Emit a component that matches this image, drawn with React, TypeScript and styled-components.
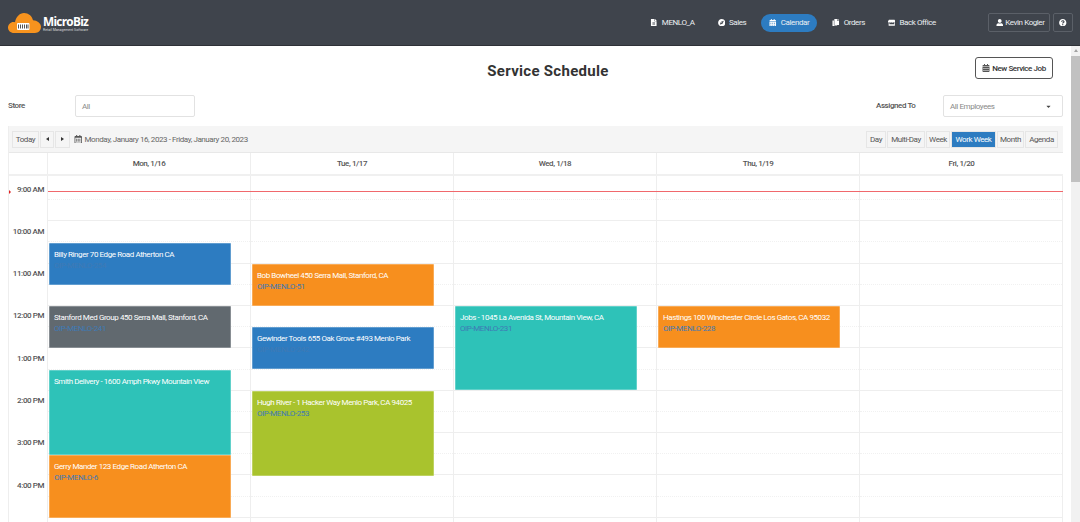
import React from "react";
import styled, { createGlobalStyle } from "styled-components";
import {
  FaCalendarAlt,
  FaCaretDown,
  FaCompass,
  FaCopy,
  FaFileAlt,
  FaQuestionCircle,
  FaRegCalendarAlt,
  FaStore,
  FaUser,
} from "react-icons/fa";

const Global = createGlobalStyle`
  html, body { margin: 0; height: 100%; overflow: hidden; background: #fff; }
  body { font-family: Roboto, "Liberation Sans", sans-serif; color: #444; letter-spacing: -0.42px; }
  button { letter-spacing: inherit; }
  * { box-sizing: border-box; }
`;

const Page = styled.div`
  height: 522px;
  display: flex;
  flex-direction: column;
`;

const Header = styled.header`
  height: 46px;
  flex: none;
  background: #3f444c;
  border-bottom: 1px solid #2e3137;
  display: flex;
  align-items: center;
  padding: 0 7px 0 8px;
`;

const Logo = styled.div`
  display: flex;
  align-items: center;
  gap: 2px;
  flex: 1;
`;

const LogoWords = styled.div`
  display: flex;
  flex-direction: column;
  margin-top: 3px;
  color: #fff;
`;

const LogoName = styled.span`
  font-family: "Open Sans", sans-serif;
  font-size: 11.8px;
  line-height: 13px;
  font-weight: 700;
  letter-spacing: -0.7px;
`;

const LogoTag = styled.span`
  font-size: 3.5px;
  line-height: 5px;
  letter-spacing: 0;
  color: #d8d8d8;
  white-space: nowrap;
`;

const Nav = styled.nav`
  display: flex;
  gap: 7px;
`;

const NavItem = styled.a<{ $active?: boolean }>`
  height: 18px;
  padding: 0 8px;
  display: flex;
  align-items: center;
  gap: 4px;
  border-radius: 9px;
  font-size: 8px;
  color: #eceff2;
  background: ${(p) => (p.$active ? "#2d7cc1" : "transparent")};
  svg { font-size: 7.5px; color: #fff; }
`;

const UserArea = styled.div`
  display: flex;
  gap: 3px;
  margin-left: 44px;
`;

const HeaderButton = styled.button<{ $pad: string }>`
  height: 19px;
  padding: ${(p) => p.$pad};
  display: flex;
  align-items: center;
  gap: 2px;
  background: transparent;
  border: 1px solid #5b6068;
  border-radius: 2px;
  color: #eceff2;
  font: 8px Roboto, sans-serif;
  svg { font-size: 7.5px; color: #fff; }
`;

const Workspace = styled.div`
  flex: 1;
  min-height: 0;
  display: flex;
`;

const Main = styled.main`
  flex: 1;
  min-width: 0;
  overflow: hidden;
  padding: 11px 8px 0;
`;

const ScrollTrack = styled.div`
  width: 9px;
  flex: none;
  background: #f1f1f1;
  display: flex;
  flex-direction: column;
  align-items: center;
`;

const ScrollUp = styled.div`
  margin: 3px 0 4px;
  width: 0;
  height: 0;
  border-left: 2.5px solid transparent;
  border-right: 2.5px solid transparent;
  border-bottom: 3px solid #a3a3a3;
`;

const ScrollThumb = styled.div`
  width: 100%;
  height: 126px;
  background: #c1c1c1;
`;

const TitleRow = styled.div`
  display: grid;
  grid-template-columns: 1fr auto 1fr;
  align-items: start;
  height: 23px;
  padding-left: 35px;
  padding-right: 10px;
`;

const Title = styled.h1`
  grid-column: 2;
  margin: 0;
  padding-top: 5px;
  font-size: 15px;
  line-height: 18px;
  font-weight: 700;
  letter-spacing: 0.3px;
  color: #333;
`;

const NewJob = styled.button`
  justify-self: end;
  width: 78px;
  height: 22px;
  padding: 0;
  background: #fff;
  border: 1px solid #555;
  border-radius: 3px;
  display: flex;
  align-items: center;
  justify-content: center;
  gap: 2px;
  font: 500 8px Roboto, sans-serif;
  color: #333;
  svg { font-size: 8px; color: #555; }
`;

const FilterRow = styled.div`
  margin-top: 15px;
  height: 22px;
  display: flex;
  align-items: flex-start;
`;

const FilterLabel = styled.label<{ $width: number }>`
  width: ${(p) => p.$width}px;
  padding-top: 6px;
  font-size: 8px;
  font-weight: 500;
  line-height: 10px;
  color: #555;
`;

const Field = styled.div`
  width: 120px;
  height: 22px;
  padding: 0 6px;
  display: flex;
  align-items: center;
  justify-content: space-between;
  border: 1px solid #e2e2e2;
  border-radius: 2px;
  font-size: 8px;
  color: #8a8a8a;
  svg { font-size: 7px; color: #444; margin-right: 4px; }
`;

const FilterGap = styled.div`
  flex: 1;
`;

const Scheduler = styled.section`
  margin-top: 9px;
  width: 1055px;
  border-left: 1px solid #eee;
`;

const Toolbar = styled.div`
  height: 27px;
  background: #f5f5f5;
  padding: 0 5px 0 3px;
  display: flex;
  align-items: center;
  border-bottom: 1px solid #e8e8e8;
`;

const ToolGroup = styled.div`
  display: flex;
  gap: 1px;
`;

const ToolButton = styled.button<{ $active?: boolean; $width: number }>`
  width: ${(p) => p.$width}px;
  height: 17px;
  padding: 0;
  display: flex;
  align-items: center;
  justify-content: center;
  border: 1px solid #e6e6e6;
  background: ${(p) => (p.$active ? "#2d7cc1" : "#f5f5f5")};
  color: ${(p) => (p.$active ? "#fff" : "#555")};
  font: 8px Roboto, sans-serif;
`;

const Arrow = styled.span<{ $dir: "l" | "r" }>`
  width: 0;
  height: 0;
  border-top: 2.5px solid transparent;
  border-bottom: 2.5px solid transparent;
  ${(p) => (p.$dir === "l" ? "border-right: 3px solid #333;" : "border-left: 3px solid #333;")}
`;

const DateRange = styled.div`
  margin-left: 4px;
  flex: 1;
  display: flex;
  align-items: center;
  gap: 2px;
  font-size: 8px;
  color: #666;
  svg { font-size: 8.5px; color: #555; }
`;

const HeadRow = styled.div`
  display: flex;
  height: 23px;
  border-bottom: 2px solid #f0f0f0;
`;

const GutterHead = styled.div`
  width: 39px;
  flex: none;
  border-right: 1px solid #eee;
`;

const DayHead = styled.div`
  width: 203px;
  flex: none;
  display: flex;
  align-items: center;
  justify-content: center;
  border-right: 1px solid #eee;
  font-size: 8px;
  font-weight: 500;
  color: #555;
  &:last-child { border-right: 0; }
`;

const Body = styled.div`
  position: relative;
  display: flex;
`;

const Gutter = styled.div`
  width: 39px;
  flex: none;
  border-right: 1px solid #eee;
  padding-top: 8.5px;
`;

const HourLabel = styled.div`
  height: 42.33px;
  padding-right: 3px;
  text-align: right;
  white-space: nowrap;
  font-size: 8px;
  line-height: 10px;
  font-weight: 500;
  color: #555;
`;

const DayColumn = styled.div`
  position: relative;
  width: 203px;
  flex: none;
  border-right: 1px solid #eee;
  &:last-of-type { border-right: 0; }
`;

const Slot = styled.div<{ $hour: boolean }>`
  height: 21.2px;
  border-bottom: 1px ${(p) => (p.$hour ? "solid #eee" : "dotted #f1f1f1")};
  &:first-child { height: 24px; }
`;

const Job = styled.article<{ $top: number; $height: number; $color: string }>`
  position: absolute;
  top: ${(p) => p.$top}px;
  left: 0.5px;
  width: 182px;
  height: ${(p) => p.$height}px;
  padding: 5px 4.5px;
  background: ${(p) => p.$color};
  border: 1px solid rgba(255, 255, 255, 0.25);
  border-radius: 1px;
  font-size: 8px;
  line-height: 11px;
`;

const JobTitle = styled.div`
  color: #fff;
  white-space: nowrap;
`;

const JobCode = styled.div`
  color: #3f7ab5;
`;

const NowLine = styled.div`
  position: absolute;
  left: 39px;
  right: 0;
  top: 15px;
  height: 1px;
  background: #f0686c;
`;

const NowMarker = styled.div`
  position: absolute;
  left: 0;
  top: 13.5px;
  width: 0;
  height: 0;
  border-top: 2px solid transparent;
  border-bottom: 2px solid transparent;
  border-left: 2px solid #e02020;
`;

const FootRow = styled.div`
  display: flex;
  height: 6px;
`;

const FootCell = styled.div<{ $width: number; $fill: boolean }>`
  width: ${(p) => p.$width}px;
  border-right: 1px solid #eee;
  background: ${(p) => (p.$fill ? "#f5f5f5" : "#fbfbfb")};
`;

const BLUE = "#2d7cc1";
const ORANGE = "#f78f1e";
const TEAL = "#2ec2b8";
const GREEN = "#a9c32d";
const SLATE = "#61696f";

type JobData = { top: number; height: number; color: string; title: string; code?: string };

const days: { label: string; jobs: JobData[] }[] = [
  {
    label: "Mon, 1/16",
    jobs: [
      { top: 66.5, height: 42, color: BLUE, title: "Billy Ringer 70 Edge Road Atherton CA", code: "OIP-MENLO-254" },
      { top: 130, height: 42, color: SLATE, title: "Stanford Med Group 450 Serra Mall, Stanford, CA", code: "OIP-MENLO-241" },
      { top: 193.5, height: 85, color: TEAL, title: "Smith Delivery - 1600 Amph Pkwy Mountain View" },
      { top: 278.5, height: 63, color: ORANGE, title: "Gerry Mander 123 Edge Road Atherton CA", code: "OIP-MENLO-6" },
    ],
  },
  {
    label: "Tue, 1/17",
    jobs: [
      { top: 87.5, height: 42, color: ORANGE, title: "Bob Bowheel 450 Serra Mall, Stanford, CA", code: "OIP-MENLO-51" },
      { top: 151, height: 42, color: BLUE, title: "Gewinder Tools 655 Oak Grove #493 Menlo Park", code: "OIP-MENLO-242" },
      { top: 214.5, height: 85, color: GREEN, title: "Hugh River - 1 Hacker Way Menlo Park, CA 94025", code: "OIP-MENLO-253" },
    ],
  },
  {
    label: "Wed, 1/18",
    jobs: [{ top: 130, height: 84, color: TEAL, title: "Jobs - 1045 La Avenida St, Mountain View, CA", code: "OIP-MENLO-231" }],
  },
  {
    label: "Thu, 1/19",
    jobs: [{ top: 130, height: 42, color: ORANGE, title: "Hastings 100 Winchester Circle Los Gatos, CA 95032", code: "OIP-MENLO-228" }],
  },
  { label: "Fri, 1/20", jobs: [] },
];

const hours = ["9:00 AM", "10:00 AM", "11:00 AM", "12:00 PM", "1:00 PM", "2:00 PM", "3:00 PM", "4:00 PM"];
const slots = Array.from({ length: 16 }, (_, i) => i);
const views: [string, number, boolean?][] = [
  ["Day", 20],
  ["Multi-Day", 38],
  ["Week", 24],
  ["Work Week", 45, true],
  ["Month", 27],
  ["Agenda", 33],
];

const LogoMark = () => (
  <svg width="33" height="20" viewBox="0 0 33 20" aria-hidden="true">
    <path
      d="M6 20C2.5 20 0 17.5 0 14.5 0 11.5 2.5 9 5.5 9c.5 0 1 0 1.5.2C8 4 11.5 0 16 0c4.5 0 8 3 9 7.2 4 .2 8 2.8 8 6.6 0 3.5-2.5 6.2-6 6.2Z"
      fill="#f7931e"
    />
    <rect x="9" y="10" width="12.5" height="7" rx="1" fill="#fff" />
    <path d="M10.5 11.5v4M12.5 11.5v4M14.5 11.5v4M16.5 11.5v4M18.5 11.5v4M20 11.5v4" stroke="#555" strokeWidth="1" />
  </svg>
);

export default function App() {
  return (
    <Page>
      <Global />
      <Header>
        <Logo>
          <LogoMark />
          <LogoWords>
            <LogoName>MicroBiz</LogoName>
            <LogoTag>Retail Management Software</LogoTag>
          </LogoWords>
        </Logo>
        <Nav>
          <NavItem><FaFileAlt />MENLO_A</NavItem>
          <NavItem><FaCompass />Sales</NavItem>
          <NavItem $active><FaCalendarAlt />Calendar</NavItem>
          <NavItem><FaCopy />Orders</NavItem>
          <NavItem><FaStore />Back Office</NavItem>
        </Nav>
        <UserArea>
          <HeaderButton $pad="0 4px 0 7px"><FaUser />Kevin Kogler</HeaderButton>
          <HeaderButton $pad="0 5.5px"><FaQuestionCircle /></HeaderButton>
        </UserArea>
      </Header>
      <Workspace>
        <Main>
          <TitleRow>
            <Title>Service Schedule</Title>
            <NewJob><FaCalendarAlt />New Service Job</NewJob>
          </TitleRow>
          <FilterRow>
            <FilterLabel $width={67}>Store</FilterLabel>
            <Field>All</Field>
            <FilterGap />
            <FilterLabel $width={67}>Assigned To</FilterLabel>
            <Field>All Employees<FaCaretDown /></Field>
          </FilterRow>
          <Scheduler>
            <Toolbar>
              <ToolGroup>
                <ToolButton $width={27}>Today</ToolButton>
                <ToolButton $width={14}><Arrow $dir="l" /></ToolButton>
                <ToolButton $width={15}><Arrow $dir="r" /></ToolButton>
              </ToolGroup>
              <DateRange><FaRegCalendarAlt />Monday, January 16, 2023 - Friday, January 20, 2023</DateRange>
              <ToolGroup>
                {views.map(([name, width, active]) => (
                  <ToolButton key={name} $width={width} $active={active}>{name}</ToolButton>
                ))}
              </ToolGroup>
            </Toolbar>
            <HeadRow>
              <GutterHead />
              {days.map((d) => <DayHead key={d.label}>{d.label}</DayHead>)}
            </HeadRow>
            <Body>
              <Gutter>
                {hours.map((h) => <HourLabel key={h}>{h}</HourLabel>)}
              </Gutter>
              {days.map((d) => (
                <DayColumn key={d.label}>
                  {slots.map((s) => <Slot key={s} $hour={s % 2 === 1} />)}
                  {d.jobs.map((j) => (
                    <Job key={j.title} $top={j.top} $height={j.height} $color={j.color}>
                      <JobTitle>{j.title}</JobTitle>
                      {j.code && <JobCode>{j.code}</JobCode>}
                    </Job>
                  ))}
                </DayColumn>
              ))}
              <NowLine />
              <NowMarker />
            </Body>
            <FootRow>
              <FootCell $width={39} $fill={false} />
              {days.map((d) => <FootCell key={d.label} $width={203} $fill />)}
            </FootRow>
          </Scheduler>
        </Main>
        <ScrollTrack>
          <ScrollUp />
          <ScrollThumb />
        </ScrollTrack>
      </Workspace>
    </Page>
  );
}
